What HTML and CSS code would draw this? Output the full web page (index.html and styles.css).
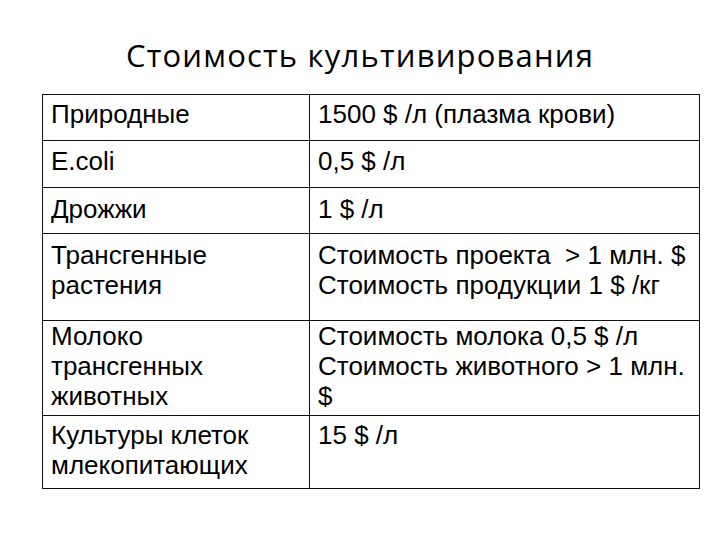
FILE: index.html
```html
<!DOCTYPE html>
<html lang="ru">
<head>
<meta charset="utf-8">
<title>Стоимость культивирования</title>
<link rel="stylesheet" href="styles.css">
</head>
<body>
<div class="slide">
  <h1 class="title">Стоимость культивирования</h1>
  <table class="costs">
    <colgroup><col class="c1"><col class="c2"></colgroup>
    <tr class="r1"><td>Природные</td><td>1500 $ /л (плазма крови)</td></tr>
    <tr class="r2"><td>E.coli</td><td>0,5 $ /л</td></tr>
    <tr class="r3"><td>Дрожжи</td><td>1 $ /л</td></tr>
    <tr class="r4"><td>Трансгенные<br>растения</td><td>Стоимость проекта&nbsp; &gt; 1 млн. $<br>Стоимость продукции 1 $ /кг</td></tr>
    <tr class="r5"><td>Молоко<br>трансгенных<br>животных</td><td>Стоимость молока 0,5 $ /л<br>Стоимость животного &gt; 1 млн.<br>$</td></tr>
    <tr class="r6"><td>Культуры клеток<br>млекопитающих</td><td>15 $ /л</td></tr>
  </table>
</div>
</body>
</html>
```

FILE: styles.css
```css
html, body {
  margin: 0;
  padding: 0;
  background: #ffffff;
}
.slide {
  width: 720px;
  height: 540px;
  overflow: hidden;
}
.title {
  margin: 0;
  box-sizing: border-box;
  height: 94px;
  padding-top: 34px;
  font-family: "Open Sans", "DejaVu Sans", sans-serif;
  font-weight: 400;
  font-size: 31px;
  line-height: 42px;
  letter-spacing: 1.2px;
  text-align: center;
  color: #000;
}
.costs {
  margin-left: 42px;
  width: 658px;
  table-layout: fixed;
  border-collapse: collapse;
  font-family: "Liberation Sans", Arial, sans-serif;
  font-size: 26px;
  line-height: 30px;
  color: #000;
}
.c1 { width: 267px; }
.costs td {
  box-sizing: border-box;
  border: 1px solid #111;
  vertical-align: top;
  padding: 0 2px 0 8px;
  white-space: nowrap;
}
.costs td + td { padding-left: 8px; }
.r1 td { height: 46px; padding-top: 4px; }
.r2 td { height: 47px; padding-top: 5px; }
.r3 td { height: 46px; padding-top: 6px; }
.r4 td { height: 87px; padding-top: 6px; }
.r5 td { height: 95px; padding-top: 0; }
.r6 td { height: 73px; padding-top: 4px; }
```
